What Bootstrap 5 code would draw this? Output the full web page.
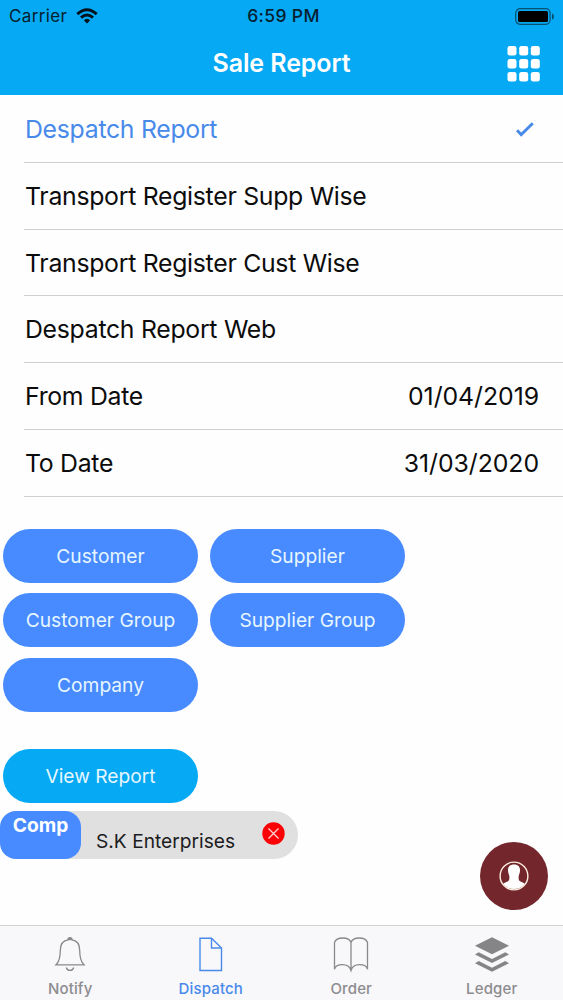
<!DOCTYPE html>
<html lang="en">
<head>
<meta charset="utf-8">
<meta name="viewport" content="width=device-width, initial-scale=1">
<title>Sale Report</title>
<link href="https://cdn.jsdelivr.net/npm/bootstrap@5.3.0/dist/css/bootstrap.min.css" rel="stylesheet">
<style>
  body { font-family: Inter, "Liberation Sans", sans-serif; background: #fefefe; color: #0c0c0c; }
  .app-screen { height: 1000px; width: 563px; }
  .app-header { background: #05a9f4; height: 95.4px; }
  .status-bar { height: 32px; display: grid; grid-template-columns: 1fr auto 1fr; padding: 0 9px; font-size: 17px; line-height: 32px; color: #06202e; }
  .carrier-name { letter-spacing: .35px; }
  .wifi-mark { margin-left: 9px; margin-top: -1px; }
  .status-time { font-weight: 500; font-size: 17.5px; letter-spacing: .35px; padding-left: 4px; }
  .title-bar { height: 64px; display: grid; grid-template-columns: 1fr auto 1fr; padding: 0 23px; }
  .title-bar h1 { font-size: 25px; font-weight: 600; letter-spacing: -.1px; line-height: 62px; color: #fff; }
  .option-list { padding: 1px 0 0 24px; }
  .option-list .option-row { height: 66.7px; border: 0; border-bottom: 1px solid #d0d0d2; border-radius: 0; padding: 1px 24px 0 1px; font-size: 24.8px; letter-spacing: -.28px; line-height: 1; color: inherit; background: transparent; }
  .option-list .option-row:last-child { border-bottom: 1px solid #d0d0d2; }
  .option-list .option-row.chosen { color: #488aea; padding-right: 29px; }
  .option-list .date-value { letter-spacing: -.05px; }
  .filter-grid { display: grid; grid-template-columns: 195px 195px; gap: 10.7px 12px; padding: 32.6px 0 0 3px; }
  .pill-btn { height: 53.7px; width: 195px; border: 0; font-size: 19.2px; line-height: 1; padding: 1px 0 0; color: #e6f6ff; background: #488aff; }
  .pill-btn:hover { color: #fff; background: #3d7ef0; }
  .view-btn { background: #05a9f4; margin: 37.9px 0 0 3px; }
  .filter-chip { width: 298px; height: 48px; margin-top: 7.5px; background: #e0e0e1; border-radius: 24px; font-size: 19.2px; }
  .chip-kind { width: 81px; height: 48px; border-radius: 16px; background: #488aff; color: #fff; font-weight: 700; line-height: 29px; text-align: center; }
  .chip-name { margin-left: 15px; padding-top: 12px; line-height: 36px; height: 48px; color: #1c1c1e; }
  .chip-close { margin: -3px 13px 0 auto; }
  .fab { width: 68px; height: 68px; right: 15px; top: 842px; border: 0; border-radius: 50%; background: #73262b; padding: 0; }
  .tab-strip { height: 75px; border-top: 1.5px solid #d3d3d5; background: #f8f7fa; padding-right: 1px; }
  .tab-item { color: #8c8c8f; font-size: 15px; letter-spacing: .15px; font-weight: 500; line-height: 20px; padding-top: 8px; text-decoration: none; }
  .tab-item.current { color: #488aea; }
  .tab-item svg { display: block; margin: 0 auto 4px; }
</style>
</head>
<body>
<div class="app-screen d-flex flex-column position-relative overflow-hidden">
  <header class="app-header">
    <div class="status-bar">
      <div class="d-flex align-items-center">
        <span class="carrier-name">Carrier</span>
        <svg class="wifi-mark" width="22" height="16" viewBox="0 0 22 16" fill="none" stroke="#06121c" stroke-width="3"><path d="M1.3 6.1Q11-2.6 20.7 6.1"/><path d="M5 9.7Q11 4.4 17 9.7"/><path d="M7.8 12.2Q11 9.2 14.200 12.2L11 15.500Z" fill="#06121c" stroke="none"/></svg>
      </div>
      <span class="status-time">6:59 PM</span>
      <div class="d-flex align-items-center justify-content-end">
        <svg width="39" height="17" viewBox="0 0 39 17"><rect x=".7" y=".7" width="34.400" height="15.600" rx="4.500" fill="none" stroke="#07506f" stroke-width="1.2"/><rect x="3" y="3" width="30" height="11" rx="1.500" fill="#000"/><path d="M37 5.500Q39 6 39 8.500T37 11.500Z" fill="#07506f"/></svg>
      </div>
    </div>
    <div class="title-bar">
      <span></span>
      <h1 class="m-0">Sale Report</h1>
      <div class="d-flex align-items-center justify-content-end">
        <svg width="33" height="36" viewBox="0 0 33 36" fill="#fff"><rect x=".5" y="0" width="9" height="9.500" rx="2.300"/><rect x="12.200" y="0" width="9" height="9.500" rx="2.300"/><rect x="23.800" y="0" width="9" height="9.500" rx="2.300"/><rect x=".5" y="13" width="9" height="9.500" rx="2.300"/><rect x="12.200" y="13" width="9" height="9.500" rx="2.300"/><rect x="23.800" y="13" width="9" height="9.500" rx="2.300"/><rect x=".5" y="26" width="9" height="9.500" rx="2.300"/><rect x="12.200" y="26" width="9" height="9.500" rx="2.300"/><rect x="23.800" y="26" width="9" height="9.500" rx="2.300"/></svg>
      </div>
    </div>
  </header>

  <main class="flex-grow-1">
    <div class="list-group list-group-flush option-list">
      <div class="list-group-item option-row chosen d-flex justify-content-between align-items-center"><span>Despatch Report</span>
        <svg width="18" height="15" viewBox="0 0 18 15" fill="none" stroke="#488aea" stroke-width="2.900"><path d="M1 8.200L5.200 12.600L16.800 1.200"/></svg></div>
      <div class="list-group-item option-row d-flex align-items-center"><span>Transport Register Supp Wise</span></div>
      <div class="list-group-item option-row d-flex align-items-center"><span>Transport Register Cust Wise</span></div>
      <div class="list-group-item option-row d-flex align-items-center"><span>Despatch Report Web</span></div>
      <div class="list-group-item option-row d-flex justify-content-between align-items-center"><span>From Date</span><span class="date-value">01/04/2019</span></div>
      <div class="list-group-item option-row d-flex justify-content-between align-items-center"><span>To Date</span><span class="date-value">31/03/2020</span></div>
    </div>

    <div class="filter-grid">
      <button class="btn rounded-pill pill-btn">Customer</button>
      <button class="btn rounded-pill pill-btn">Supplier</button>
      <button class="btn rounded-pill pill-btn">Customer Group</button>
      <button class="btn rounded-pill pill-btn">Supplier Group</button>
      <button class="btn rounded-pill pill-btn">Company</button>
    </div>
    <button class="btn rounded-pill pill-btn view-btn d-block">View Report</button>

    <div class="filter-chip d-flex align-items-center">
      <div class="chip-kind">Comp</div>
      <div class="chip-name">S.K Enterprises</div>
      <svg class="chip-close" width="23" height="23" viewBox="0 0 23 23"><circle cx="11.500" cy="11.500" r="11.200" fill="#fb0207"/><path d="M6.500 6.500L16.500 16.500M16.500 6.500L6.500 16.500" stroke="#ffd9d9" stroke-width="1.200"/></svg>
    </div>
  </main>

  <button class="btn fab position-absolute d-flex align-items-center justify-content-center" aria-label="Profile">
    <svg width="30" height="30" viewBox="0 0 30 30"><circle cx="15" cy="15" r="13.900" fill="none" stroke="#fff0e2" stroke-width="1.400"/><path d="M15 3.500C10.500 3.500 8.800 6.200 9 9.600C9.100 11.600 9.600 13.200 10.200 14.500C10.500 16.500 10.500 18 10 19.200C9 20.600 6.200 21 4.200 22.700A13.500 13.500 0 0 0 25.800 22.700C23.800 21 21 20.600 20 19.200C19.500 18 19.500 16.500 19.800 14.500C20.400 13.200 20.900 11.600 21 9.600C21.200 6.200 19.500 3.500 15 3.500Z" fill="#fff"/></svg>
  </button>

  <nav class="tab-strip d-flex text-center">
    <a class="tab-item flex-fill w-25" href="#">
      <svg width="34" height="41" viewBox="0 0 34 41" fill="none" stroke="#89898c" stroke-width="1.300"><g transform="translate(2 3.5)"><path d="M13.200 2.300C6.500 3 5.300 8 5.300 13C5.300 20 4.500 24 1 27.300H29C25.500 24 24.700 20 24.700 13C24.700 8 23.500 3 16.800 2.300"/><path d="M13 2.200A2 2 0 0 1 17 2.200Z" fill="#89898c"/><path d="M11.300 30A3.800 3.800 0 0 0 18.700 30"/></g></svg>Notify</a>
    <a class="tab-item current flex-fill w-25" href="#">
      <svg width="34" height="41" viewBox="0 0 34 41" fill="none" stroke="#488aea" stroke-width="1.400"><path d="M6 4.300H17.500L27.500 14V36.500H6Z"/><path d="M17.500 4.300V14H27.500"/></svg>Dispatch</a>
    <a class="tab-item flex-fill w-25" href="#">
      <svg width="36" height="41" viewBox="0 0 36 41" fill="none" stroke="#89898c" stroke-width="1.300"><path d="M18 36.500V8.500C16 2.500 3.500 2.500 1.500 8.500V35.300C3 29.500 15.500 28.500 18 36.500C20.500 28.500 33 29.500 34.500 35.300V8.500C32.500 2.500 20 2.500 18 8.500"/></svg>Order</a>
    <a class="tab-item flex-fill w-25" href="#">
      <svg width="34" height="41" viewBox="0 0 34 41" fill="#858588"><path d="M17 3.300L34 11.700L17 20.300L0 11.700Z"/><path d="M0 20.600L3.700 18.300L17 25L30.300 18.300L34 20.600L17 29Z"/><path d="M0 29.300L3.700 27L17 33.700L30.300 27L34 29.300L17 37.700Z"/></svg>Ledger</a>
  </nav>
</div>
<script src="https://cdn.jsdelivr.net/npm/bootstrap@5.3.0/dist/js/bootstrap.bundle.min.js"></script>
</body>
</html>
